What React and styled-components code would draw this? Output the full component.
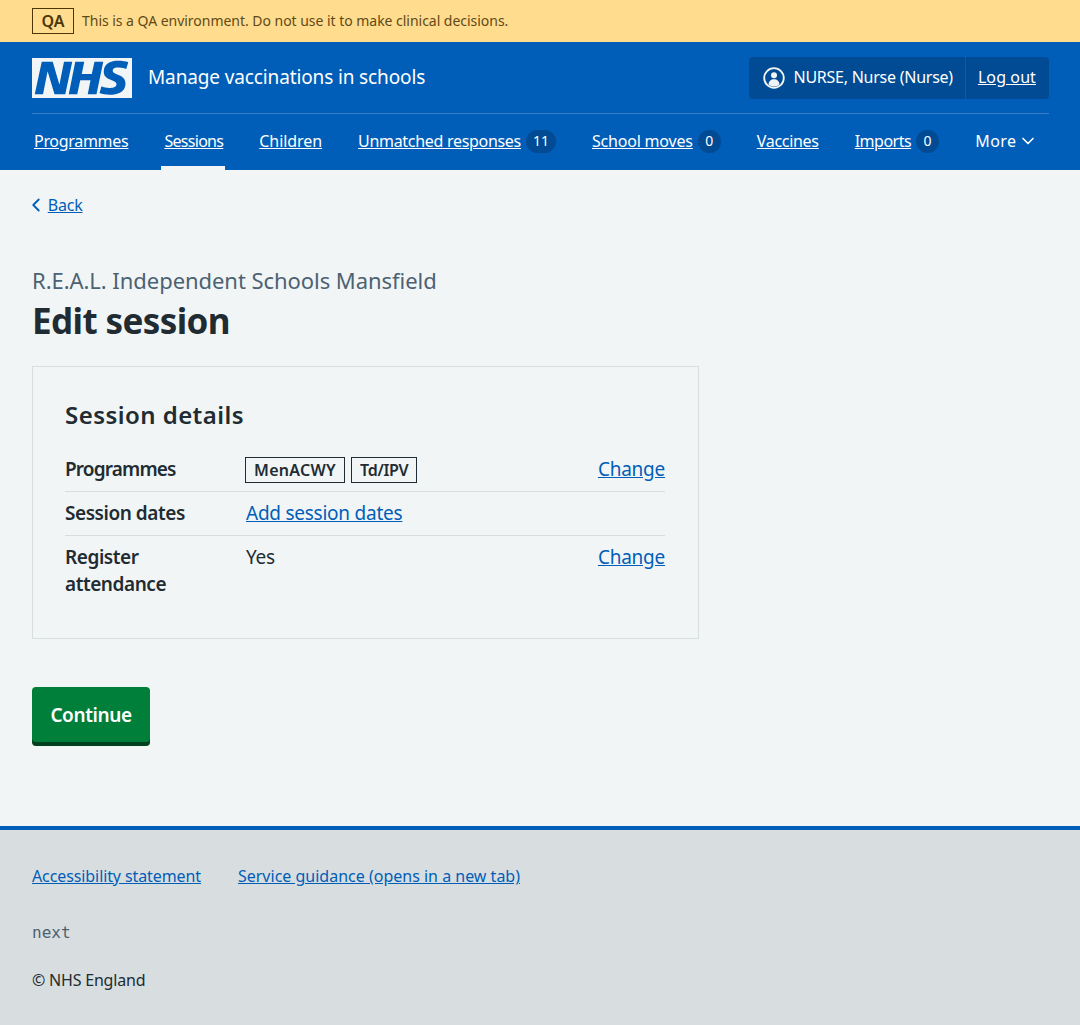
import styled, { createGlobalStyle } from "styled-components";
import { ChevronDown, ChevronLeft } from "lucide-react";

const GlobalStyle = createGlobalStyle`
  html, body {
    margin: 0;
    padding: 0;
    background: #f2f5f6;
    color: #212b32;
    font-family: "Noto Sans", "Open Sans", Arial, sans-serif;
    font-size: 16px;
    line-height: 24px;
  }

  * {
    box-sizing: border-box;
  }
`;

const QaBanner = styled.div`
  display: flex;
  align-items: center;
  gap: 8px;
  height: 42px;
  padding: 0 32px;
  background: #ffdc8e;
  color: #5f4a16;
  font-size: 14px;
  letter-spacing: -0.03px;
`;

const QaTag = styled.span`
  display: inline-flex;
  align-items: center;
  justify-content: center;
  width: 42px;
  height: 26px;
  border: 1px solid #4d3708;
  color: #4d3708;
  font-size: 16px;
  font-weight: 600;
  letter-spacing: 0;
`;

const Header = styled.header`
  background: #005eb8;
  color: #fff;
  height: 128px;
  padding: 15px 31px 0 32px;
`;

const HeaderTop = styled.div`
  display: flex;
  align-items: center;
  justify-content: space-between;
  height: 42px;
`;

const Brand = styled.div`
  display: flex;
  align-items: center;
  gap: 16px;
  font-size: 19px;
  line-height: 26px;
  letter-spacing: -0.13px;
`;

const BrandName = styled.span`
  margin-bottom: 2px;
`;

const Account = styled.div`
  display: flex;
  align-items: stretch;
  height: 42px;
  border-radius: 4px;
  background: #004b93;
  font-size: 16px;
`;

const AccountName = styled.div`
  display: flex;
  align-items: center;
  gap: 9px;
  padding: 0 12px 0 14px;
  border-right: 1px solid #005eb8;
  letter-spacing: -0.25px;
`;

const AccountLabel = styled.span`
  margin-bottom: 2px;
`;

const AccountLink = styled.a`
  display: flex;
  align-items: center;
  padding: 0 13px 2px 12px;
  color: #fff;
  text-decoration: underline;
  letter-spacing: 0.1px;
`;

const Nav = styled.nav`
  display: flex;
  align-items: stretch;
  gap: 32px;
  height: 57px;
  margin-top: 14px;
  border-top: 1px solid #3a7cc6;
`;

const NavItem = styled.a`
  position: relative;
  display: flex;
  align-items: center;
  gap: 5px;
  padding: 0 2px 2px;
  color: #fff;
  font-size: 16px;
  white-space: nowrap;
`;

const NavText = styled.span`
  letter-spacing: ${({ $tracking }) => $tracking}px;
  text-decoration: ${({ $plain }) => ($plain ? "none" : "underline")};
`;

const NavChevron = styled(ChevronDown)`
  margin-left: -4px;
`;

const ActiveBar = styled.span`
  position: absolute;
  left: -1px;
  right: 0;
  bottom: 0;
  height: 4px;
  background: #f2f5f6;
`;

const Count = styled.span`
  display: inline-flex;
  align-items: center;
  justify-content: center;
  min-width: 23px;
  height: 23px;
  padding: 0 7px;
  border-radius: 12px;
  background: #004b93;
  color: #fff;
  font-size: 14px;
`;

const Main = styled.main`
  height: 656px;
  padding: 23px 32px 0;
`;

const BackLink = styled.a`
  display: flex;
  align-items: center;
  width: fit-content;
  height: 24px;
  color: #005eb8;
  font-size: 16px;
  letter-spacing: -0.2px;

  span {
    text-decoration: underline;
  }
`;

const BackChevron = styled(ChevronLeft)`
  margin: 0 1px 0 -7.3px;
`;

const Caption = styled.div`
  margin-top: 49px;
  color: #4c6272;
  font-size: 22px;
  line-height: 28px;
  letter-spacing: -0.05px;
`;

const Title = styled.h1`
  margin: 7px 0 0;
  font-size: 35px;
  line-height: 40px;
  font-weight: 700;
  letter-spacing: -0.6px;
`;

const Card = styled.section`
  width: 667px;
  height: 273px;
  margin-top: 25px;
  padding: 32px 33px 32px 32px;
  border: 1px solid #d8dde0;
`;

const CardTitle = styled.h2`
  margin: 0 0 17px;
  font-size: 24px;
  line-height: 32px;
  font-weight: 600;
  letter-spacing: 0.45px;
`;

const Row = styled.div`
  display: grid;
  grid-template-columns: 181px 1fr auto;
  padding: 8px 0;
  border-bottom: ${({ $last }) => ($last ? "none" : "1px solid #d8dde0")};
  font-size: 19px;
  line-height: 27px;
  letter-spacing: -0.2px;
`;

const RowKey = styled.div`
  font-weight: 600;
  letter-spacing: ${({ $tracking = -0.45 }) => $tracking}px;
`;

const RowLink = styled.a`
  color: #005eb8;
  text-decoration: underline;
  letter-spacing: -0.25px;
`;

const Tags = styled.div`
  display: flex;
  gap: 6px;
  margin: 1px 0 0 -1px;
`;

const Tag = styled.span`
  display: inline-flex;
  align-items: center;
  height: 26px;
  padding: 0 8px;
  border: 1px solid #212b32;
  font-size: 16px;
  font-weight: 600;
  letter-spacing: ${({ $tracking }) => $tracking}px;
`;

const Button = styled.button`
  display: block;
  width: 118px;
  height: 55px;
  margin: 48px 0 0;
  padding: 0;
  border: 0;
  border-radius: 4px;
  background: #007f3b;
  box-shadow: 0 4px 0 #00401e;
  color: #fff;
  font-family: inherit;
  font-size: 19px;
  font-weight: 600;
  letter-spacing: -0.4px;
`;

const Footer = styled.footer`
  height: 199px;
  padding: 34px 32px 0;
  border-top: 4px solid #005eb8;
  background: #d8dde0;
`;

const FooterLinks = styled.div`
  display: flex;
  gap: 37px;
`;

const FooterLink = styled.a`
  color: #005eb8;
  font-size: 16px;
  letter-spacing: ${({ $tracking }) => $tracking}px;
  text-decoration: underline;
`;

const Version = styled.div`
  margin-top: 33px;
  color: #4c6272;
  font-family: "DejaVu Sans Mono", monospace;
  font-size: 16px;
`;

const Copyright = styled.div`
  margin-top: 23px;
  font-size: 16px;
  letter-spacing: -0.2px;
`;

const NhsLogo = () => (
  <svg width="100" height="40" viewBox="0 0 40 16" aria-label="NHS" role="img">
    <path fill="#f2f5f6" d="M0 0h40v16H0z" />
    <path
      fill="#005eb8"
      d="M3.9 1.5h4.4l2.6 9h.1l1.8-9h3.3l-2.8 13H9l-2.7-9h-.1l-1.8 9H1.1M17.3 1.5h3.6l-1 4.9h4L25 1.5h3.5l-2.7 13h-3.5l1.1-5.6h-4.1l-1.2 5.6h-3.4M37.7 4.4c-.7-.3-1.6-.6-2.9-.6-1.4 0-2.5.2-2.5 1.3 0 1.8 5.1 1.2 5.1 5.1 0 3.6-3.3 4.5-6.4 4.5-1.3 0-2.9-.3-4-.7l.8-2.7c.7.4 2.1.7 3.2.7s2.8-.2 2.8-1.5c0-2.1-5.1-1.3-5.1-5 0-3.4 2.9-4.4 5.8-4.4 1.6 0 3.1.2 4 .6"
    />
  </svg>
);

const UserIcon = () => (
  <svg width="22" height="22" viewBox="0 0 22 22" aria-hidden="true">
    <circle cx="11" cy="11" r="9.8" fill="none" stroke="#f2f5f6" strokeWidth="1.8" />
    <circle cx="11" cy="8.2" r="3" fill="#f2f5f6" />
    <path fill="#f2f5f6" d="M5.6 17.4c0-3.2 2.2-5.2 5.4-5.2s5.4 2 5.4 5.2c-1.4 1.4-3.3 2.2-5.4 2.2s-4-.8-5.4-2.2z" />
  </svg>
);

// letter spacing per link, the nav font runs a little different from the original
const navItems = [
  { label: "Programmes", tracking: -0.3 },
  { label: "Sessions", tracking: -0.7 },
  { label: "Children", tracking: -0.07 },
  { label: "Unmatched responses", tracking: -0.3, count: 11 },
  { label: "School moves", tracking: -0.2, count: 0 },
  { label: "Vaccines", tracking: -0.3 },
  { label: "Imports", tracking: -0.5, count: 0 },
];

export default function App() {
  return (
    <>
      <GlobalStyle />
      <QaBanner>
        <QaTag>QA</QaTag>
        This is a QA environment. Do not use it to make clinical decisions.
      </QaBanner>

      <Header>
        <HeaderTop>
          <Brand>
            <NhsLogo />
            <BrandName>Manage vaccinations in schools</BrandName>
          </Brand>
          <Account>
            <AccountName>
              <UserIcon />
              <AccountLabel>NURSE, Nurse (Nurse)</AccountLabel>
            </AccountName>
            <AccountLink>Log out</AccountLink>
          </Account>
        </HeaderTop>
        <Nav>
          {navItems.map((item) => (
            <NavItem key={item.label}>
              <NavText $tracking={item.tracking}>{item.label}</NavText>
              {item.count !== undefined && <Count>{item.count}</Count>}
              {item.label === "Sessions" && <ActiveBar />}
            </NavItem>
          ))}
          <NavItem>
            <NavText $plain $tracking={0.5}>
              More
            </NavText>
            <NavChevron size={20} strokeWidth={2} />
          </NavItem>
        </Nav>
      </Header>

      <Main>
        <BackLink>
          <BackChevron size={22} strokeWidth={2} />
          <span>Back</span>
        </BackLink>
        <Caption>R.E.A.L. Independent Schools Mansfield</Caption>
        <Title>Edit session</Title>

        <Card>
          <CardTitle>Session details</CardTitle>
          <Row>
            <RowKey $tracking={-0.85}>Programmes</RowKey>
            <Tags>
              <Tag $tracking={0.3}>MenACWY</Tag>
              <Tag $tracking={-0.35}>Td/IPV</Tag>
            </Tags>
            <RowLink>Change</RowLink>
          </Row>
          <Row>
            <RowKey>Session dates</RowKey>
            <div>
              <RowLink>Add session dates</RowLink>
            </div>
          </Row>
          <Row $last>
            <RowKey>
              Register
              <br />
              attendance
            </RowKey>
            <div>Yes</div>
            <RowLink>Change</RowLink>
          </Row>
        </Card>

        <Button>Continue</Button>
      </Main>

      <Footer>
        <FooterLinks>
          <FooterLink $tracking={-0.1}>Accessibility statement</FooterLink>
          <FooterLink $tracking={0}>Service guidance (opens in a new tab)</FooterLink>
        </FooterLinks>
        <Version>next</Version>
        <Copyright>© NHS England</Copyright>
      </Footer>
    </>
  );
}
